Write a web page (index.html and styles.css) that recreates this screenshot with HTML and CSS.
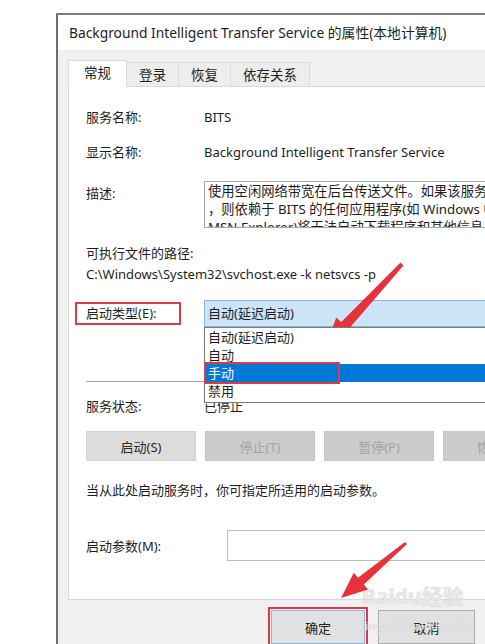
FILE: index.html
```html
<!DOCTYPE html>
<html lang="zh-CN">
<head>
    <meta charset="UTF-8">
    <meta name="viewport" content="width=device-width, initial-scale=1.0">
    <title>Background Intelligent Transfer Service 的属性(本地计算机)</title>
    <link rel="stylesheet" href="styles.css">
</head>
<body>
    <div class="window">
        <div class="titlebar">Background Intelligent Transfer Service 的属性(本地计算机)</div>

        <div class="tabs">
            <div class="tab active">常规</div>
            <div class="tab">登录</div>
            <div class="tab">恢复</div>
            <div class="tab">依存关系</div>
        </div>

        <div class="page">
            <div class="row name-row"><span class="label">服务名称:</span><span>BITS</span></div>
            <div class="row display-row"><span class="label">显示名称:</span><span>Background Intelligent Transfer Service</span></div>
            <div class="row desc-row">
                <span class="label">描述:</span>
                <div class="desc">
                    <div>使用空闲网络带宽在后台传送文件。如果该服务被禁用</div>
                    <div>，则依赖于 BITS 的任何应用程序(如 Windows Update 或</div>
                    <div>MSN Explorer)将无法自动下载程序和其他信息。</div>
                </div>
            </div>
            <div class="path-label">可执行文件的路径:</div>
            <div class="path">C:\Windows\System32\svchost.exe -k netsvcs -p</div>

            <div class="row start-row">
                <span class="label"><span class="mark">启动类型(E):</span></span>
                <div class="combo-wrap">
                    <div class="combo">自动(延迟启动)</div>
                    <ul class="dropdown">
                        <li>自动(延迟启动)</li>
                        <li>自动</li>
                        <li class="hover">手动</li>
                        <li>禁用</li>
                        <div class="pick"></div>
                    </ul>
                </div>
            </div>

            <div class="sep"></div>

            <div class="row status-row"><span class="label">服务状态:</span><span>已停止</span></div>

            <div class="buttons">
                <button class="svc-btn on">启动(S)</button>
                <button class="svc-btn">停止(T)</button>
                <button class="svc-btn">暂停(P)</button>
                <button class="svc-btn">恢复(R)</button>
            </div>

            <div class="note">当从此处启动服务时，你可指定所适用的启动参数。</div>

            <div class="row param-row"><span class="label">启动参数(M):</span><div class="input"></div></div>
        </div>

        <div class="footer">
            <div class="ok-mark"><button class="btn primary">确定</button></div>
            <button class="btn cancel">取消</button>
            <button class="btn cancel">应用(A)</button>
        </div>
    </div>

    <div class="watermark">
        <div class="wm-logo">Baidu经验</div>
        <div class="wm-url">jingyan.baidu.com</div>
    </div>

    <!-- red hint arrows -->
    <svg class="arrows" width="485" height="644" viewBox="0 0 485 644">
        <polygon fill="#e5323b" points="403.5,265.5 348.7,328.9 353.8,333.6 326,346 336.2,317.4 341.3,322.1 400.5,262.5"/>
        <polygon fill="#e5323b" points="407,544 363.8,584.6 368,589.6 341,598 353.8,572.8 358,577.8 405,542"/>
    </svg>
</body>
</html>
```

FILE: styles.css
```css
* {
    box-sizing: border-box;
}

body {
    margin: 0;
    height: 644px;
    overflow: hidden;
    background: #fff;
    font-family: "Noto Sans", "Noto Sans CJK SC", sans-serif;
    font-size: 13px;
    color: #1e1e1e;
}

.window {
    margin: 13px 0 0 56px;
    width: 480px;
    height: 640px;
    background: #f0f0f0;
    border-top: 2px solid #7c7c7c;
    border-left: 2px solid #6e6e6e;
}

.titlebar {
    height: 35px;
    line-height: 35px;
    padding-left: 11px;
    background: #fff;
    font-size: 13.8px;
    white-space: nowrap;
}

.tabs {
    display: flex;
    align-items: flex-end;
    height: 36px;
    padding-left: 10px;
}

.tab {
    height: 24px;
    line-height: 25px;
    padding: 0 12px;
    border: 1px solid #dadada;
    border-bottom: none;
    background: #ededed;
    margin-left: -1px;
    font-size: 13.5px;
}

.tab.active {
    position: relative;
    z-index: 1;
    height: 27px;
    line-height: 24px;
    padding: 0 15px;
    margin: 0 0 -1px 0;
    background: #fff;
}

.page {
    margin-left: 10px;
    padding: 20px 0 38px 17px;
    background: #fff;
    border: 1px solid #d9d9d9;
}

.row {
    display: flex;
    align-items: center;
    line-height: 20px;
    white-space: nowrap;
}

.label {
    width: 118px;
    flex: none;
}

.display-row {
    margin-top: 15px;
}

.desc-row {
    margin-top: 19px;
    align-items: flex-start;
}

.desc-row .label {
    padding-top: 2px;
}

.desc {
    flex: 1;
    height: 47px;
    padding: 0 3px;
    border: 1px solid #a8a8a8;
    font-size: 13.3px;
    line-height: 18px;
    overflow: hidden;
}

.path-label {
    margin-top: 15px;
    line-height: 21px;
}

.path {
    line-height: 21px;
}

.start-row {
    margin-top: 15px;
    height: 27px;
}

.mark {
    display: inline-block;
    margin-left: -11px;
    padding: 0 22px 0 9px;
    line-height: 19px;
    border: 2px solid #df3b45;
}

.combo-wrap {
    position: relative;
    flex: 1;
}

.combo {
    height: 27px;
    line-height: 25px;
    padding-left: 3px;
    border: 1px solid #8fb4d8;
    background: #cce4f7;
}

.dropdown {
    position: absolute;
    z-index: 2;
    top: 27px;
    left: 0;
    right: -20px;
    height: 76px;
    margin: 0;
    padding: 0;
    list-style: none;
    background: #fff;
    border: 1px solid #7a7a7a;
}

.dropdown li {
    height: 18px;
    line-height: 18px;
    padding-left: 3px;
}

.dropdown li.hover {
    background: #0078d7;
    color: #fff;
}

.pick {
    position: absolute;
    left: -1px;
    top: 34px;
    width: 136px;
    height: 22px;
    border: 2px solid #df3b45;
}

.sep {
    margin-top: 54px;
    height: 1px;
    background: #a0a0a0;
}

.status-row {
    margin-top: 14px;
}

.buttons {
    display: flex;
    gap: 9px;
    margin-top: 15px;
}

.svc-btn {
    flex: none;
    width: 110px;
    height: 30px;
    font: inherit;
    color: #a3a3a3;
    background: #cccccc;
    border: 1px solid #c6c6c6;
}

.svc-btn.on {
    color: #2a2a2a;
    background: #dcdcdc;
    border-color: #d2d2d2;
}

.note {
    margin-top: 19px;
    line-height: 20px;
}

.param-row {
    margin-top: 30px;
}

.param-row .label {
    width: 141px;
}

.input {
    flex: 1;
    height: 31px;
    border: 1px solid #bcbcbc;
}

.footer {
    display: flex;
    align-items: flex-start;
    gap: 10px;
    padding: 7px 0 0 210px;
}

.ok-mark {
    padding: 1px;
    border: 2px solid #db3a44;
}

.btn {
    height: 34px;
    font: inherit;
    color: #1e1e1e;
    background: #e1e1e1;
    border: 1px solid #adadad;
}

.btn.primary {
    width: 94px;
    border-color: #8cb8e0;
}

.btn.cancel {
    flex: none;
    width: 97px;
    margin-top: 3px;
}

.watermark {
    position: absolute;
    left: 362px;
    top: 583px;
    color: rgba(255, 255, 255, 0.7);
    text-shadow: 0 0 1px #b0b0b0;
    pointer-events: none;
}

.wm-logo {
    font-size: 21px;
    font-weight: bold;
    line-height: 26px;
}

.wm-url {
    font-size: 11px;
    line-height: 14px;
    margin-top: 10px;
    letter-spacing: 0.5px;
}

.arrows {
    position: absolute;
    left: 0;
    top: 0;
    pointer-events: none;
}
```
